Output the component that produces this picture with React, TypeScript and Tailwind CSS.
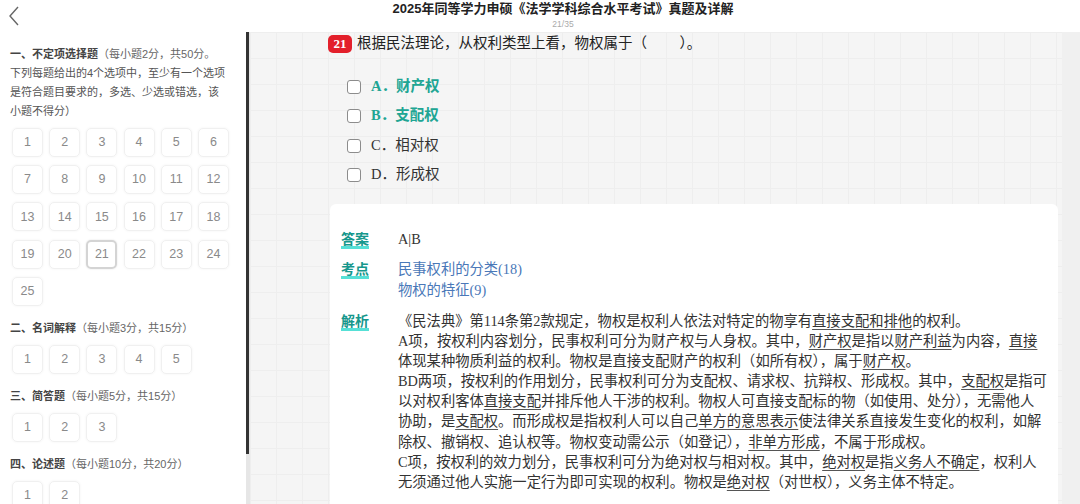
import React from "react";

const SANS = { fontFamily: '"Liberation Sans","Noto Sans CJK SC",sans-serif' };
const SERIF = { fontFamily: '"Liberation Serif","Noto Sans CJK SC",serif' };

function NumGrid({ nums, active }: { nums: number[]; active?: number }) {
  return (
    <div className="grid grid-cols-[repeat(6,31px)] gap-x-[6.2px] gap-y-[8.2px] pl-[12px]">
      {nums.map((n) => (
        <div
          key={n}
          className={
            "h-[29px] w-[31px] flex items-center justify-center rounded-[5px] text-[12.5px] text-[#8a8a8a] " +
            (n === active
              ? "border-2 border-[#d4d4d4] shadow-[0_0_2px_rgba(0,0,0,0.12)]"
              : "border border-[#f0f0f0] shadow-[0_0_3px_rgba(0,0,0,0.05)]")
          }
        >
          {n}
        </div>
      ))}
    </div>
  );
}

function SectionHead({ bold, rest }: { bold: string; rest: string }) {
  return (
    <div className="pl-[10px] text-[11px] leading-[19px]">
      <span className="font-bold text-[#444]">{bold}</span>
      <span className="text-[#666]">{rest}</span>
    </div>
  );
}

const U = ({ children }: { children: React.ReactNode }) => (
  <span className="underline decoration-[#555] underline-offset-[3px] decoration-1">{children}</span>
);

function Label({ children }: { children: React.ReactNode }) {
  return (
    <div className="w-[57px] shrink-0 leading-[20px]">
      <span
        className="font-bold text-[14px] text-[#16978c] underline decoration-[#56e0d6] decoration-[3px] underline-offset-[2px]"
        style={SANS}
      >
        {children}
      </span>
    </div>
  );
}

function Option({ letter, text, correct }: { letter: string; text: string; correct?: boolean }) {
  return (
    <div className="flex items-center h-[29.5px]">
      <div className="w-[14px] h-[14px] rounded-[3px] border border-[#8c8c8c] bg-white mr-[10px]" />
      <span
        className={"text-[14.5px] " + (correct ? "font-bold text-[#20a593]" : "text-[#333]")}
        style={SERIF}
      >
        {letter}．{text}
      </span>
    </div>
  );
}

export default function App() {
  return (
    <div className="w-[1080px] h-[504px] overflow-hidden flex flex-col bg-white" style={SANS}>
      {/* header */}
      <div className="h-[32px] shrink-0 relative flex flex-col items-center bg-white pl-[46px]">
        <svg className="absolute left-[8px] top-[6px]" width="12" height="20" viewBox="0 0 12 20">
          <path d="M10 1 L2 10 L10 19" fill="none" stroke="#666" strokeWidth="1.4" />
        </svg>
        <div className="text-[13px] font-bold text-[#222] leading-[16px] mt-[1px]">
          2025年同等学力申硕《法学学科综合水平考试》真题及详解
        </div>
        <div className="text-[8.5px] text-[#aaa] leading-[12px] mt-[1px]">21/35</div>
      </div>

      <div className="flex flex-1 min-h-0">
        {/* sidebar */}
        <div className="w-[246px] shrink-0 bg-white pt-[13px]">
          <div className="pl-[10px] text-[11px] leading-[19px] text-[#555]">
            <div>
              <span className="font-bold text-[#444]">一、不定项选择题</span>
              <span className="text-[#666]">（每小题2分，共50分。</span>
            </div>
            <div>下列每题给出的4个选项中，至少有一个选项</div>
            <div>是符合题目要求的，多选、少选或错选，该</div>
            <div>小题不得分）</div>
          </div>
          <div className="mt-[7px]">
            <NumGrid nums={Array.from({ length: 25 }, (_, i) => i + 1)} active={21} />
          </div>
          <div className="mt-[13px]">
            <SectionHead bold="二、名词解释" rest="（每小题3分，共15分）" />
          </div>
          <div className="mt-[7px]">
            <NumGrid nums={[1, 2, 3, 4, 5]} />
          </div>
          <div className="mt-[13px]">
            <SectionHead bold="三、简答题" rest="（每小题5分，共15分）" />
          </div>
          <div className="mt-[7px]">
            <NumGrid nums={[1, 2, 3]} />
          </div>
          <div className="mt-[13px]">
            <SectionHead bold="四、论述题" rest="（每小题10分，共20分）" />
          </div>
          <div className="mt-[7px]">
            <NumGrid nums={[1, 2]} />
          </div>
        </div>

        {/* scrollbar line */}
        <div className="w-[4px] shrink-0 bg-[#e6e6e6] flex flex-col">
          <div className="h-[422px] w-[3px] bg-[#333]" />
        </div>

        {/* main */}
        <div className="flex-1 flex min-w-0 bg-[#f5f5f5] bg-[linear-gradient(to_right,#eeeeee_1px,transparent_1px),linear-gradient(to_bottom,#eeeeee_1px,transparent_1px)] bg-[size:26px_26px]">
          <div className="flex-1 pl-[78px] pr-[4px] pt-[3px] min-w-0">
            <div className="flex items-center h-[18px]">
              <div
                className="h-[18px] w-[24px] rounded-[5px] bg-[#e3202b] text-white text-[13px] font-bold flex items-center justify-center"
                style={SERIF}
              >
                21
              </div>
              <div className="ml-[5px] text-[14.5px] text-[#222]" style={SERIF}>
                根据民法理论，从权利类型上看，物权属于（　　 ）。
              </div>
            </div>
            <div className="pl-[19px] mt-[19px]">
              <Option letter="A" text="财产权" correct />
              <Option letter="B" text="支配权" correct />
              <Option letter="C" text="相对权" />
              <Option letter="D" text="形成权" />
            </div>

            <div className="ml-[2px] mt-[14px] bg-white rounded-t-[6px] pl-[11px] pt-[25px] pb-[20px] h-[300px]">
              <div className="flex text-[14.3px] text-[#333]" style={SERIF}>
                <Label>答案</Label>
                <div className="leading-[20px]">A|B</div>
              </div>
              <div className="flex mt-[10px] text-[14.3px] text-[#4a78b8]" style={SERIF}>
                <Label>考点</Label>
                <div className="leading-[21px]">
                  <div>民事权利的分类(18)</div>
                  <div>物权的特征(9)</div>
                </div>
              </div>
              <div className="flex mt-[10px] text-[14.3px] text-[#333]" style={SERIF}>
                <Label>解析</Label>
                <div className="leading-[20.1px] whitespace-nowrap">
                  <div>
                    《民法典》第114条第2款规定，物权是权利人依法对特定的物享有<U>直接支配和排他</U>的权利。
                  </div>
                  <div>
                    A项，按权利内容划分，民事权利可分为财产权与人身权。其中，<U>财产权</U>是指以<U>财产利益</U>为内容，<U>直接</U>
                  </div>
                  <div>体现某种物质利益的权利。物权是直接支配财产的权利（如所有权），属于<U>财产权</U>。</div>
                  <div>
                    BD两项，按权利的作用划分，民事权利可分为支配权、请求权、抗辩权、形成权。其中，<U>支配权</U>是指可
                  </div>
                  <div>
                    以对权利客体<U>直接支配</U>并排斥他人干涉的权利。物权人可直接支配标的物（如使用、处分），无需他人
                  </div>
                  <div>
                    协助，是<U>支配权</U>。而形成权是指权利人可以自己<U>单方的意思表示</U>使法律关系直接发生变化的权利，如解
                  </div>
                  <div>除权、撤销权、追认权等。物权变动需公示（如登记），<U>非单方形成</U>，不属于形成权。</div>
                  <div>
                    C项，按权利的效力划分，民事权利可分为绝对权与相对权。其中，<U>绝对权</U>是指<U>义务人不确定</U>，权利人
                  </div>
                  <div>无须通过他人实施一定行为即可实现的权利。物权是<U>绝对权</U>（对世权），义务主体不特定。</div>
                </div>
              </div>
            </div>
          </div>
          <div className="w-[18px] shrink-0 bg-[#f0f0f0]" />
        </div>
      </div>
    </div>
  );
}
